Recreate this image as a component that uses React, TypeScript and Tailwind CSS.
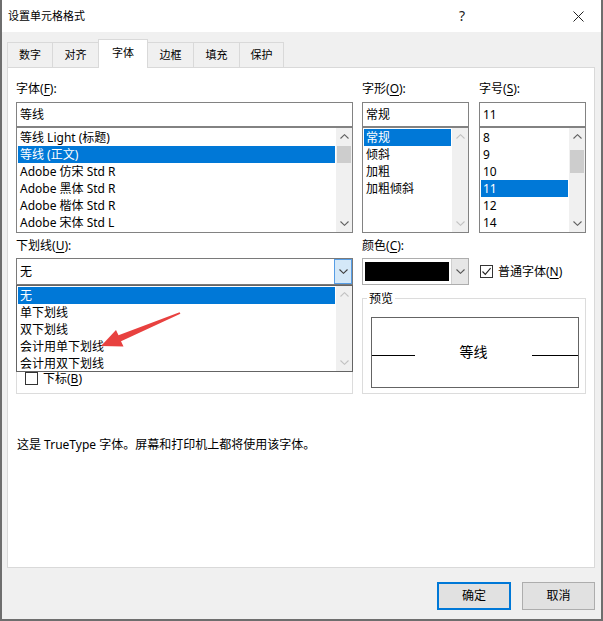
import React from "react";

function Chevron({ dir, color }: { dir: "up" | "down"; color: string }) {
  return (
    <svg width="9" height="5" viewBox="0 0 9 5">
      <path
        d={dir === "up" ? "M0.5 4.5 L4.5 0.7 L8.5 4.5" : "M0.5 0.5 L4.5 4.3 L8.5 0.5"}
        fill="none"
        stroke={color}
        strokeWidth="1.1"
      />
    </svg>
  );
}

function VScroll({ disabled, thumb }: { disabled?: boolean; thumb?: string }) {
  const c = disabled ? "#c2c2c2" : "#606060";
  return (
    <div className="flex w-[16px] shrink-0 flex-col bg-[#f0f0f0]">
      <div className="flex h-[17px] items-center justify-center">
        <Chevron dir="up" color={c} />
      </div>
      <div className="flex-1">{thumb ? <div className={"mx-[1px] bg-[#cdcdcd] " + thumb} /> : null}</div>
      <div className="flex h-[17px] items-center justify-center">
        <Chevron dir="down" color={c} />
      </div>
    </div>
  );
}

function Label({ text, u, tail }: { text: string; u: string; tail?: string }) {
  return (
    <div className="h-[17px] whitespace-nowrap leading-[17px]">
      {text}(<span className="underline underline-offset-2">{u}</span>){tail ?? ":"}
    </div>
  );
}

function ListBox({
  items,
  selected,
  thumb,
  disabled,
}: {
  items: string[];
  selected: number;
  thumb?: string;
  disabled?: boolean;
}) {
  return (
    <div className="flex h-[106px] border border-[#828282] bg-white">
      <div className="flex-1 overflow-hidden pl-[1px] pr-[1px] pt-[1px]">
        {items.map((t, i) => (
          <div
            key={t}
            className={
              "h-[17px] whitespace-nowrap pl-[2px] leading-[17px] " +
              (i === selected ? "bg-[#0078d7] text-white" : "")
            }
          >
            {t}
          </div>
        ))}
      </div>
      <VScroll thumb={thumb} disabled={disabled} />
    </div>
  );
}

function CheckBox({ checked }: { checked?: boolean }) {
  return (
    <div className="flex h-[13px] w-[13px] shrink-0 items-center justify-center border border-[#333333] bg-white">
      {checked ? (
        <svg width="11" height="11" viewBox="0 0 11 11">
          <path d="M1.5 5.5 L4.3 8.4 L9.6 2.2" fill="none" stroke="#222" strokeWidth="1.1" />
        </svg>
      ) : null}
    </div>
  );
}

const tabs = [
  { t: "数字", w: "w-[45px]" },
  { t: "对齐", w: "w-[46px]" },
  { t: "字体", w: "w-[50px]", sel: true },
  { t: "边框", w: "w-[45px]" },
  { t: "填充", w: "w-[46px]" },
  { t: "保护", w: "w-[45px]" },
];

export default function App() {
  return (
    <div className="relative flex h-[621px] w-[603px] flex-col overflow-hidden border-x-2 border-b-2 border-[#6e6e6e] bg-[#f0f0f0] text-[12px] text-black font-['Noto_Sans','Noto_Sans_CJK_SC',sans-serif]">
      {/* Title bar */}
      <div className="flex h-[32px] shrink-0 items-center bg-white">
        <span className="pl-[6px] text-[11px] leading-[16px]">设置单元格格式</span>
        <div className="ml-auto flex h-full items-center">
          <div className="mr-[70px] flex h-full w-[46px] items-center justify-center text-[14px] leading-none text-[#222]">
            ?
          </div>
          <div className="flex h-full w-[46px] items-center justify-center">
            <svg width="11" height="11" viewBox="0 0 11 11">
              <path d="M0.5 0.5 L10.5 10.5 M10.5 0.5 L0.5 10.5" stroke="#222" strokeWidth="1" />
            </svg>
          </div>
        </div>
      </div>

      {/* Tabs */}
      <div className="flex h-[35px] shrink-0 items-end pl-[5px]">
        {tabs.map((tb, i) => {
          const afterSel = i > 0 && tabs[i - 1].sel;
          if (tb.sel) {
            return (
              <div
                key={tb.t}
                className={
                  "relative z-10 -mb-[1px] flex h-[29px] items-center justify-center border border-b-0 border-[#d9d9d9] bg-white pb-[2px] text-[11px] " +
                  tb.w
                }
              >
                {tb.t}
              </div>
            );
          }
          return (
            <div
              key={tb.t}
              className={
                "flex h-[25px] items-center justify-center border-t border-[#d9d9d9] bg-[#f0f0f0] text-[11px] " +
                tb.w +
                (afterSel ? "" : " border-l") +
                (i === tabs.length - 1 ? " border-r" : "")
              }
            >
              {tb.t}
            </div>
          );
        })}
      </div>

      {/* Panel */}
      <div className="ml-[5px] h-[501px] w-[588px] shrink-0 border border-[#d9d9d9] bg-white px-[8px] pt-[12px]">
        {/* Row 1 */}
        <div className="flex">
          <div className="w-[337px]">
            <Label text="字体" u="F" />
            <div className="mt-[5px] h-[25px] border border-[#828282] pl-[3px] leading-[23px]">等线</div>
            <ListBox
              items={[
                "等线 Light (标题)",
                "等线 (正文)",
                "Adobe 仿宋 Std R",
                "Adobe 黑体 Std R",
                "Adobe 楷体 Std R",
                "Adobe 宋体 Std L",
              ]}
              selected={1}
              thumb="mt-[1px] h-[17px]"
            />
          </div>
          <div className="ml-[9px] w-[107px]">
            <Label text="字形" u="O" />
            <div className="mt-[5px] h-[25px] border border-[#828282] pl-[3px] leading-[23px]">常规</div>
            <ListBox items={["常规", "倾斜", "加粗", "加粗倾斜"]} selected={0} disabled />
          </div>
          <div className="ml-[10px] w-[107px]">
            <Label text="字号" u="S" />
            <div className="mt-[5px] h-[25px] border border-[#828282] pl-[3px] leading-[23px]">11</div>
            <ListBox items={["8", "9", "10", "11", "12", "14"]} selected={3} thumb="mt-[5px] h-[23px]" />
          </div>
        </div>

        {/* Row 2 */}
        <div className="mt-[4px] flex">
          <div className="w-[337px]">
            <Label text="下划线" u="U" />
            <div className="relative z-20 mt-[4px] flex h-[27px] border border-[#7a7a7a] bg-white">
              <div className="flex-1 pl-[3px] leading-[25px]">无</div>
              <div className="flex w-[18px] items-center justify-center border border-[#569de5] bg-[#d4e8f8]">
                <Chevron dir="down" color="#404040" />
              </div>
              {/* open dropdown */}
              <div className="absolute left-[-1px] right-[-1px] top-[26px] flex h-[87px] border border-[#646464] bg-white">
                <div className="flex-1 pl-[1px] pr-[1px] pt-[1px]">
                  {["无", "单下划线", "双下划线", "会计用单下划线", "会计用双下划线"].map((t, i) => (
                    <div
                      key={t}
                      className={
                        "h-[17px] pl-[2px] leading-[17px] " + (i === 0 ? "bg-[#0078d7] text-white" : "")
                      }
                    >
                      {t}
                    </div>
                  ))}
                </div>
                <VScroll disabled />
              </div>
            </div>
            {/* effects group (mostly covered by the open dropdown) */}
            <div className="mt-[14px] flex h-[95px] flex-col justify-end border border-[#dcdcdc] pb-[1px] pl-[8px]">
              <div className="flex h-[28px] items-center gap-[5px]">
                <CheckBox />
                <span className="leading-[13px]">
                  下标(<span className="underline underline-offset-2">B</span>)
                </span>
              </div>
            </div>
          </div>

          <div className="ml-[9px] w-[224px]">
            <Label text="颜色" u="C" />
            <div className="mt-[4px] flex h-[27px] items-center">
              <div className="flex h-full w-[107px] items-center border border-[#adadad] bg-white">
                <div className="ml-[2px] h-[19px] w-[84px] bg-black" />
                <div className="ml-auto flex h-full w-[17px] items-center justify-center border-l border-[#cfcfcf] bg-[#e6e6e6]">
                  <Chevron dir="down" color="#555" />
                </div>
              </div>
              <div className="ml-[11px] flex items-center gap-[5px]">
                <CheckBox checked />
                <span className="whitespace-nowrap leading-[17px]">
                  普通字体(<span className="underline underline-offset-2">N</span>)
                </span>
              </div>
            </div>
            {/* preview */}
            <div className="relative mt-[13px] h-[96px] w-[224px] border border-[#dcdcdc]">
              <span className="absolute left-[4px] top-[-9px] bg-white px-[2px] leading-[17px]">预览</span>
              <div className="ml-[8px] mt-[18px] h-[71px] w-[208px] border border-[#646464] pt-[24px]">
                <div className="flex h-[20px]">
                  <div className="mb-[6px] h-[1px] w-[43px] self-end bg-black" />
                  <div className="flex-1 text-center text-[14px] leading-[20px]">等线</div>
                  <div className="mb-[6px] h-[1px] w-[46px] self-end bg-black" />
                </div>
              </div>
            </div>
          </div>
        </div>

        <div className="mt-[42px] pl-[1px] leading-[17px]">这是 TrueType 字体。屏幕和打印机上都将使用该字体。</div>
      </div>

      {/* Buttons */}
      <div className="mt-[14px] flex justify-end gap-[11px] pr-[6px]">
        <div className="flex h-[28px] w-[74px] items-center justify-center border-2 border-[#0078d7] bg-[#e1e1e1]">
          确定
        </div>
        <div className="flex h-[28px] w-[73px] items-center justify-center border border-[#adadad] bg-[#e1e1e1]">
          取消
        </div>
      </div>

      {/* red annotation arrow */}
      <svg
        className="pointer-events-none absolute left-[-2px] top-0 z-30"
        width="603"
        height="621"
        viewBox="0 0 603 621"
      >
        <polygon
          points="101,346 116,330 118.5,335.3 179.6,312.2 180.4,313.8 121,341.2 123.5,346.5"
          fill="#e8413f"
        />
      </svg>
    </div>
  );
}
